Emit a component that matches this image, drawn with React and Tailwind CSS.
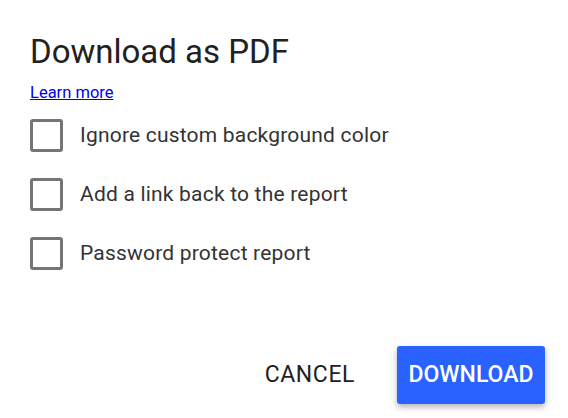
export default function App() {
  const options = [
    "Ignore custom background color",
    "Add a link back to the report",
    "Password protect report",
  ];
  return (
    <div
      className="w-[568px] h-[418px] bg-white relative"
      style={{ fontFamily: "Roboto, 'Liberation Sans', sans-serif" }}
    >
      <div className="pl-[30px] pt-[32px]">
        <h1 className="text-[33px] leading-[40px] text-[#212121]">Download as PDF</h1>
        <a href="#" className="block mt-[11px] text-[16.5px] leading-[20px] text-[#0000ee] underline">
          Learn more
        </a>
        <div className="mt-[16px] flex flex-col gap-[26px]">
          {options.map((o) => (
            <label key={o} className="flex items-center gap-[17px]">
              <span className="w-[33px] h-[33px] border-[3px] border-[#757575] rounded-[3px]" />
              <span className="text-[21px] tracking-[0.2px] text-[#333]">{o}</span>
            </label>
          ))}
        </div>
      </div>
      <div className="absolute right-[23px] bottom-[14px] flex items-center gap-[42px]">
        <button className="text-[23px] text-[#212121] tracking-wide">CANCEL</button>
        <button className="w-[148px] h-[58px] rounded-[3px] bg-[#2962ff] text-white text-[23px] font-medium shadow-[0_3px_6px_rgba(0,0,0,0.3)]">
          DOWNLOAD
        </button>
      </div>
    </div>
  );
}
